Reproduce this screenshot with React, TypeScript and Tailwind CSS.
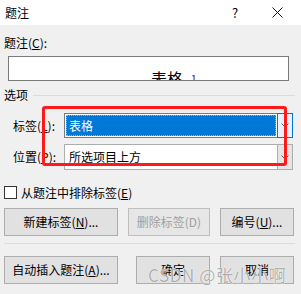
import React from 'react';

const font = { fontFamily: '"Noto Sans CJK SC", "Microsoft YaHei", sans-serif' };

const Button: React.FC<{ label: React.ReactNode; className?: string; disabled?: boolean }> = ({ label, className = '', disabled }) => (
  <div
    className={`h-[28px] flex items-center justify-center bg-[#e1e1e1] border border-[#adadad] text-[12px] ${disabled ? 'text-[#a0a0a0] border-[#bfbfbf] bg-[#e6e6e6]' : 'text-black'} ${className}`}
  >
    {label}
  </div>
);

const Chevron: React.FC = () => (
  <svg width="8" height="5" viewBox="0 0 8 5" fill="none">
    <path d="M0.5 0.5 L4 4 L7.5 0.5" stroke="#606060" strokeWidth="1" />
  </svg>
);

const App: React.FC = () => {
  return (
    <div className="relative w-[301px] h-[294px] bg-[#f0f0f0] overflow-hidden select-none" style={font}>
      {/* title bar */}
      <div className="h-[25px] bg-white flex items-center text-[12px] text-black">
        <span className="pl-[5px] flex-1">题注</span>
        <span className="w-[10px] text-center mr-[32px] text-[13px]">?</span>
        <svg width="11" height="11" viewBox="0 0 11 11" className="mr-[18px]">
          <path d="M0.5 0.5 L10.5 10.5 M10.5 0.5 L0.5 10.5" stroke="#111" strokeWidth="1" />
        </svg>
      </div>

      <div className="px-[4px] text-[12px] text-black">
        <div className="h-[16px] mt-[10px] leading-[16px]">
          题注(<span className="underline">C</span>):
        </div>
        <div className="ml-[4px] mt-[5px] w-[281px] h-[25px] border border-[#7a7a7a] bg-white overflow-hidden flex items-start pl-[142px]">
          <div className="mt-[13px] flex items-start">
            <span className="text-[16px] leading-[16px]">表格</span>
            <span className="ml-[8px] mt-[4px] text-[10px] leading-[10px] text-[#1a1a6a]">1</span>
          </div>
        </div>

        <div className="mt-[7px] h-[14px] flex items-center">
          <span className="leading-[14px]">选项</span>
          <div className="flex-1 h-px bg-[#dcdcdc] ml-[5px] mr-[2px]" />
        </div>

        <div className="mt-[11px] flex items-center">
          <span className="pl-[9px] w-[60px]">
            标签(<span className="underline">L</span>):
          </span>
          <div className="w-[229px] h-[25px] border border-[#7a7a7a] bg-white flex">
            <div className="flex-1 p-[1px]">
              <div className="h-full bg-[#0078d7] text-white border border-dotted border-[#f0a040] flex items-center pl-[2px] text-[12px]">
                表格
              </div>
            </div>
            <div className="w-[16px] -my-px -mr-px border border-[#0078d7] bg-[#e5f1fb] flex items-center justify-center">
              <Chevron />
            </div>
          </div>
        </div>

        <div className="mt-[6px] flex items-center">
          <span className="pl-[9px] w-[60px]">
            位置(<span className="underline">P</span>):
          </span>
          <div className="w-[229px] h-[26px] border border-[#adadad] bg-white flex">
            <div className="flex-1 flex items-center pl-[4px]">所选项目上方</div>
            <div className="w-[16px] -my-px -mr-px border border-[#adadad] bg-[#e5e5e5] flex items-center justify-center">
              <Chevron />
            </div>
          </div>
        </div>

        <div className="mt-[16px] flex items-center h-[13px]">
          <div className="w-[13px] h-[13px] border border-[#333] bg-white" />
          <span className="ml-[4px]">
            从题注中排除标签(<span className="underline">E</span>)
          </span>
        </div>

        <div className="mt-[9px] flex">
          <Button className="w-[114px]" label={<>新建标签(<span className="underline">N</span>)...</>} />
          <Button className="w-[82px] ml-[10px]" disabled label="删除标签(D)" />
          <Button className="w-[74px] ml-[10px]" label={<>编号(<span className="underline">U</span>)...</>} />
        </div>

        <div className="mt-[7px] h-px bg-[#dcdcdc] mr-[2px]" />

        <div className="mt-[12px] flex">
          <Button className="w-[114px]" label={<>自动插入题注(<span className="underline">A</span>)...</>} />
          <Button className="w-[74px] ml-[18px]" label="确定" />
          <Button className="w-[74px] ml-[10px]" label="取消" />
        </div>
      </div>

      {/* red annotation box */}
      <div className="absolute left-[42px] top-[106px] w-[245px] h-[60px] border-[3px] border-[#ff1a1a] rounded-[3px] pointer-events-none" />

      {/* watermark */}
      <div
        className="absolute left-[148px] top-[265px] text-[17px] leading-[20px] text-[#8a8a8a]/70 tracking-[0.6px] pointer-events-none"
        style={{ fontFamily: '"Noto Sans CJK SC", sans-serif', textShadow: '0 0 1px #fff, 0 0 1px #fff' }}
      >
        CSDN @张小小啊
      </div>
    </div>
  );
};

export default App;
